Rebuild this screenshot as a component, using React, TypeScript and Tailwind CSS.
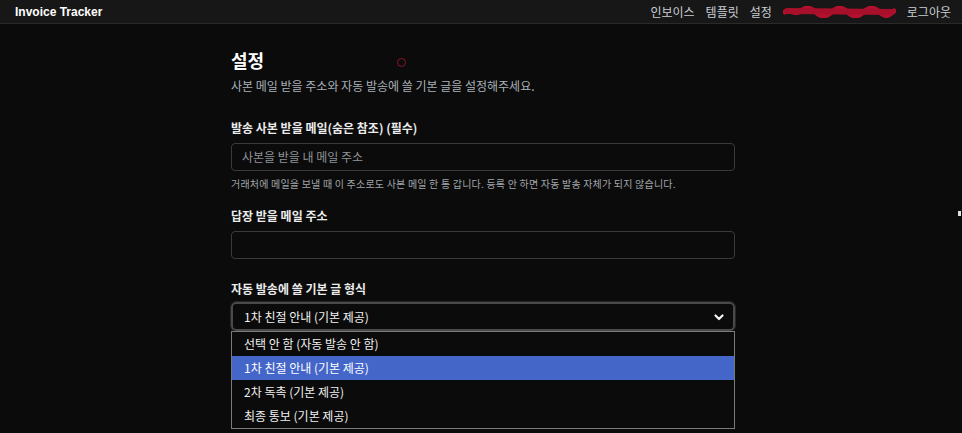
import React from "react";

const font = { fontFamily: '"Noto Sans CJK KR", "Noto Sans", sans-serif' };

function Scribble() {
  return (
    <svg width="113" height="12" viewBox="0 0 113 12" className="block">
      <path
        d="M2 6 C8 2 12 10 18 5 S28 2 34 7 S44 10 50 5 S60 2 66 7 S76 10 82 5 S92 2 98 7 S106 9 111 5"
        fill="none"
        stroke="#b3112e"
        strokeWidth="5"
        strokeLinecap="round"
      />
      <path d="M4 5 L109 6" fill="none" stroke="#a80f2a" strokeWidth="6" strokeLinecap="round" />
    </svg>
  );
}

function Chevron() {
  return (
    <svg width="12" height="12" viewBox="0 0 12 12">
      <path d="M2.5 4.5 L6 8 L9.5 4.5" fill="none" stroke="#f5f5f5" strokeWidth="2.2" strokeLinecap="round" strokeLinejoin="round" />
    </svg>
  );
}

const options = [
  "선택 안 함 (자동 발송 안 함)",
  "1차 친절 안내 (기본 제공)",
  "2차 독촉 (기본 제공)",
  "최종 통보 (기본 제공)",
];

export default function App() {
  return (
    <div className="relative h-[433px] w-[962px] overflow-hidden bg-[#0b0b0b] text-[#e8e8e8]" style={font}>
      <header className="flex h-[24px] items-center justify-between border-b border-[#2a2a2a] bg-[#171717] pl-[15px] pr-[11px]">
        <span className="text-[12px] font-bold leading-none text-white" style={{ fontFamily: '"Liberation Sans", "Noto Sans CJK KR", sans-serif' }}>
          Invoice Tracker
        </span>
        <nav className="flex items-center gap-[11px] text-[12px] leading-none text-[#c9ced4]">
          <span>인보이스</span>
          <span>템플릿</span>
          <span>설정</span>
          <Scribble />
          <span>로그아웃</span>
        </nav>
      </header>

      <main className="ml-[231px] w-[504px] pt-[22px]">
        <h1 className="text-[18px] font-bold leading-[28px] text-white">설정</h1>
        <p className="mt-[3px] text-[12px] leading-[18px] text-[#a9b0b8]">
          사본 메일 받을 주소와 자동 발송에 쓸 기본 글을 설정해주세요.
        </p>

        <label className="mt-[24px] block text-[12px] font-semibold leading-[18px] text-[#ececec]">
          발송 사본 받을 메일(숨은 참조) (필수)
        </label>
        <div className="mt-[6px] flex h-[28px] items-center rounded-[4px] border border-[#3a3a3a] bg-[#0b0b0b] px-[10px] text-[12px] text-[#8e949a]">
          사본을 받을 내 메일 주소
        </div>
        <p className="mt-[6px] text-[10px] leading-[14px] tracking-[0.2px] text-[#a0a5aa]">
          거래처에 메일을 보낼 때 이 주소로도 사본 메일 한 통 갑니다. 등록 안 하면 자동 발송 자체가 되지 않습니다.
        </p>

        <label className="mt-[16px] block text-[12px] font-semibold leading-[18px] text-[#ececec]">
          답장 받을 메일 주소
        </label>
        <div className="mt-[6px] h-[28px] rounded-[4px] border border-[#3a3a3a] bg-[#0b0b0b]" />

        <label className="mt-[21px] block text-[12px] font-semibold leading-[18px] text-[#ececec]">
          자동 발송에 쓸 기본 글 형식
        </label>
        <div className="relative mt-[4px]">
          <div className="flex h-[29px] items-center justify-between rounded-[5px] border-2 border-[#4a4a4a] bg-[#0b0b0b] pl-[11px] pr-[8px] text-[12px] text-[#f2f2f2] outline outline-1 outline-[#262626]">
            <span>1차 친절 안내 (기본 제공)</span>
            <Chevron />
          </div>
          <ul className="absolute left-0 right-0 top-[29px] border border-[#7a7a7a] bg-[#0b0b0b] text-[12px] text-[#f0f0f0]">
            {options.map((o, i) => (
              <li
                key={o}
                className={
                  i === 1
                    ? "flex h-[24px] items-center bg-[#4466c8] pl-[12px] text-white"
                    : "flex h-[24px] items-center pl-[12px]"
                }
              >
                {o}
              </li>
            ))}
          </ul>
        </div>
      </main>

      <span className="absolute left-[397px] top-[58px] h-[9px] w-[9px] rounded-full border-[1.5px] border-[#8c1328]" />
      <span className="absolute left-[958px] top-[211px] h-[5px] w-[3px] bg-[#e0e0e0]" />
    </div>
  );
}
